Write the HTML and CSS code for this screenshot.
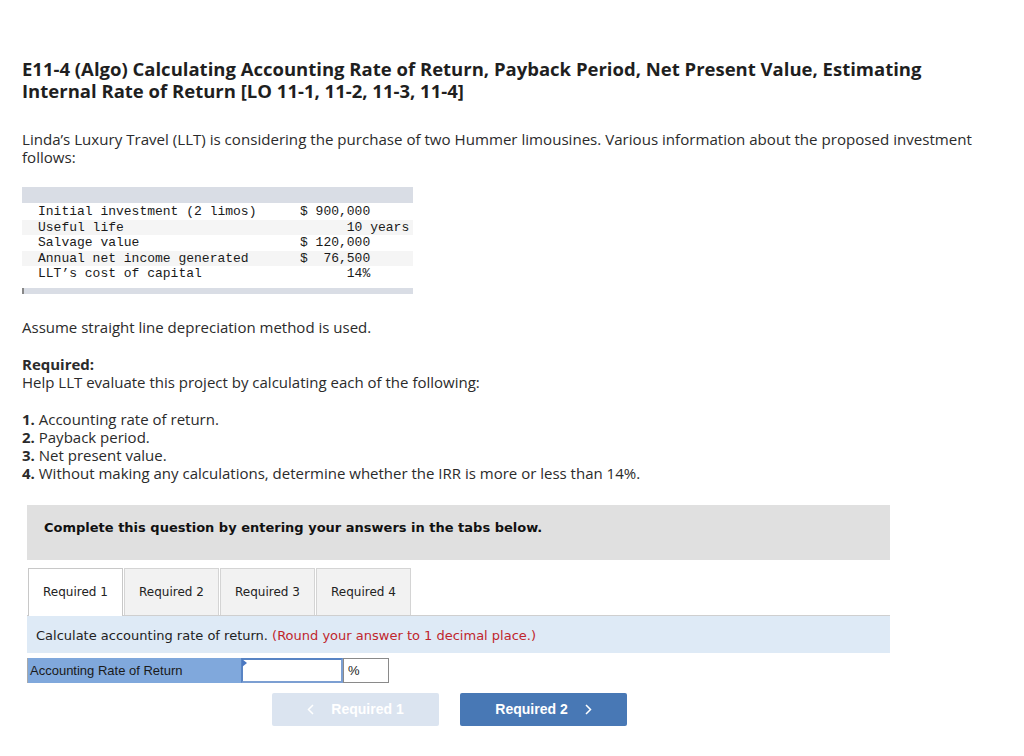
FILE: index.html
```html
<!DOCTYPE html>
<html>
<head>
<meta charset="utf-8">
<link rel="stylesheet" href="styles.css">
</head>
<body>
<div class="page">
  <h1 class="title">E11-4 (Algo) Calculating Accounting Rate of Return, Payback Period, Net Present Value, Estimating Internal Rate of Return [LO 11-1, 11-2, 11-3, 11-4]</h1>
  <p class="intro">Linda’s Luxury Travel (LLT) is considering the purchase of two Hummer limousines. Various information about the proposed investment follows:</p>

  <div class="datatable">
    <div class="dt-head"></div>
    <div class="dt-row"><span class="dt-label">Initial investment (2 limos)</span><span class="dt-val">$ 900,000</span></div>
    <div class="dt-row alt"><span class="dt-label">Useful life</span><span class="dt-val">      10 years</span></div>
    <div class="dt-row"><span class="dt-label">Salvage value</span><span class="dt-val">$ 120,000</span></div>
    <div class="dt-row alt"><span class="dt-label">Annual net income generated</span><span class="dt-val">$  76,500</span></div>
    <div class="dt-row"><span class="dt-label">LLT’s cost of capital</span><span class="dt-val">      14%</span></div>
    <div class="dt-foot"></div>
  </div>

  <p class="assume">Assume straight line depreciation method is used.</p>

  <p class="req"><strong>Required:</strong><br>Help LLT evaluate this project by calculating each of the following:</p>

  <ol class="steps">
    <li><strong>1.</strong> Accounting rate of return.</li>
    <li><strong>2.</strong> Payback period.</li>
    <li><strong>3.</strong> Net present value.</li>
    <li><strong>4.</strong> Without making any calculations, determine whether the IRR is more or less than 14%.</li>
  </ol>

  <div class="answer">
    <div class="banner">Complete this question by entering your answers in the tabs below.</div>

    <div class="tabs">
      <div class="tab active">Required 1</div>
      <div class="tab">Required 2</div>
      <div class="tab">Required 3</div>
      <div class="tab">Required 4</div>
    </div>

    <div class="instruct">Calculate accounting rate of return. <span class="hint">(Round your answer to 1 decimal place.)</span></div>

    <div class="inputrow">
      <div class="inlabel">Accounting Rate of Return</div>
      <div class="infield"><span class="flag"></span></div>
      <div class="inunit">%</div>
    </div>

    <div class="nav">
      <div class="btn prev"><svg class="chev" width="7" height="11" viewBox="0 0 7 11"><path d="M6 1 L1.5 5.5 L6 10" fill="none" stroke="#fff" stroke-width="1.5"/></svg>Required 1</div>
      <div class="btn next">Required 2<svg class="chev" width="7" height="11" viewBox="0 0 7 11"><path d="M1 1 L5.5 5.5 L1 10" fill="none" stroke="#fff" stroke-width="1.5"/></svg></div>
    </div>
  </div>
</div>
</body>
</html>
```

FILE: styles.css
```css
html, body {
  margin: 0;
  padding: 0;
  background: #fff;
}
.page {
  padding: 58px 0 0 22px;
  width: 980px;
  font-family: "Open Sans", "Lato", sans-serif;
  color: #2b2b2b;
}
.title {
  margin: 0;
  font-size: 18.5px;
  line-height: 22px;
  font-weight: 700;
  color: #1f1f1f;
  width: 960px;
}
.intro {
  margin: 28px 0 0 0;
  font-size: 15.1px;
  line-height: 18px;
  width: 960px;
}
.datatable {
  margin-top: 21px;
  width: 391px;
  font-family: "Liberation Mono", "Courier New", monospace;
  font-size: 13px;
  color: #1a1a1a;
  overflow: hidden;
}
.dt-head {
  height: 16px;
  background: #d9dde5;
}
.dt-row {
  display: flex;
  height: 15.6px;
  line-height: 15.6px;
  padding-left: 16px;
}
.dt-head + .dt-row { margin-top: 1px; }
.dt-row.alt { background: #f5f5f5; }
.dt-label { width: 262px; flex: none; white-space: pre; }
.dt-val { white-space: pre; }
.dt-foot {
  margin-top: 6px;
  height: 6px;
  background: #d9dde5;
  border-left: 2px solid #888;
}
.assume {
  margin: 24px 0 0 0;
  font-size: 15px;
  line-height: 18px;
}
.req {
  margin: 19px 0 0 0;
  font-size: 15px;
  line-height: 18px;
}
.steps {
  list-style: none;
  margin: 19px 0 0 0;
  padding: 0;
  font-size: 15px;
  line-height: 18px;
}
.answer {
  margin-top: 23px;
  margin-left: 5px;
  width: 863px;
  font-family: "DejaVu Sans", Verdana, sans-serif;
}
.banner {
  background: #e0e0e0;
  height: 55px;
  line-height: 45px;
  padding-left: 17px;
  font-size: 13px;
  font-weight: 700;
  color: #111;
  box-sizing: border-box;
}
.tabs {
  display: flex;
  margin-top: 8px;
  padding-left: 1px;
  border-bottom: 1px solid #cfcfcf;
  height: 47px;
}
.tab {
  width: 95px;
  height: 47px;
  box-sizing: border-box;
  border: 1px solid #d4d4d4;
  border-bottom: none;
  background: #f2f2f2;
  font-size: 12px;
  line-height: 47px;
  text-align: center;
  color: #222;
  margin-right: 1px;
}
.tab.active {
  background: #fff;
  height: 48px;
  border-color: #c8c8c8;
}
.instruct {
  background: #deeaf6;
  height: 37px;
  line-height: 39px;
  padding-left: 9px;
  font-size: 13px;
  color: #222;
}
.hint { color: #c0262d; }
.inputrow {
  display: flex;
  margin-top: 5px;
  height: 25px;
}
.inlabel {
  width: 214px;
  background: #80a8dc;
  border-left: 1px solid #aaa;
  font-family: "Liberation Sans", Arial, sans-serif;
  font-size: 13px;
  line-height: 25px;
  padding-left: 2px;
  color: #1a1a1a;
  box-sizing: border-box;
}
.infield {
  position: relative;
  width: 102px;
  box-sizing: border-box;
  border: 2px solid #5884c4;
  border-bottom-color: #7c9fd2;
  border-right-color: #7c9fd2;
  background: #fff;
}
.flag {
  position: absolute;
  left: -1px;
  top: -1px;
  width: 0;
  height: 0;
  border-top: 4px solid transparent;
  border-bottom: 4px solid transparent;
  border-left: 5px solid #4a78c2;
}
.inunit {
  width: 46px;
  box-sizing: border-box;
  border: 1px solid #8a8a8a;
  background: #fff;
  font-family: "Liberation Sans", Arial, sans-serif;
  font-size: 13px;
  line-height: 23px;
  padding-left: 4px;
  color: #222;
}
.nav {
  display: flex;
  margin-top: 10px;
  padding-left: 245px;
  gap: 21px;
}
.btn {
  width: 167px;
  height: 33px;
  border-radius: 2px;
  font-family: "Liberation Sans", Arial, sans-serif;
  font-weight: 700;
  font-size: 14px;
  line-height: 33px;
  display: flex;
  align-items: center;
  justify-content: center;
  color: #fff;
}
.btn.prev { background: #dbe4f0; }
.btn.next { background: #4878b5; }
.btn.prev .chev { margin-right: 17px; }
.btn.next .chev { margin-left: 17px; }
```
